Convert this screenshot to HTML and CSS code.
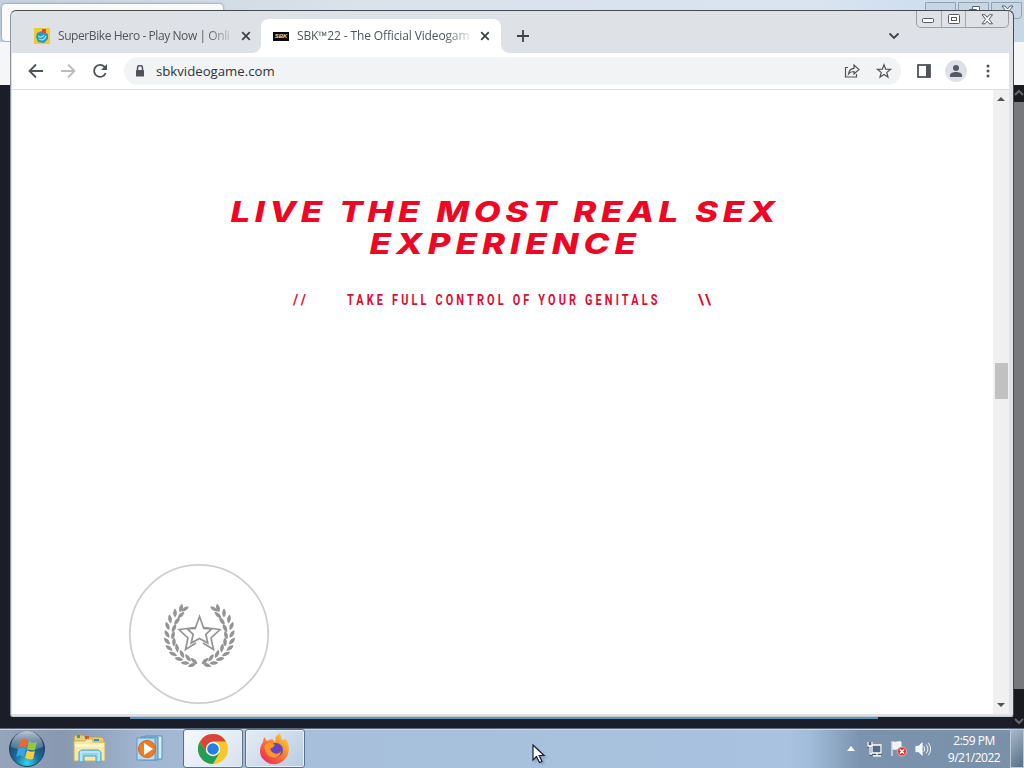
FILE: index.html
```html
<!DOCTYPE html>
<html lang="en">
<head>
<meta charset="utf-8">
<title>SBK 22 - The Official Videogame</title>
<link rel="stylesheet" href="styles.css">
</head>
<body>
<div class="desktop">
  <div class="rear">
    <div class="rear-title"><div class="rear-tab"></div>
      <div class="rear-controls">
        <span></span><span><svg width="13" height="13" viewBox="0 0 13 13"><path d="M4.500 4V1.500h7v7H9M1.500 4.500h7v7h-7z"/></svg></span><span><svg width="13" height="11" viewBox="0 0 13 11"><path d="M1 1h3l2.500 3L9 1h3L8.500 5.500 12 10H9L6.500 7 4 10H1l3.500-4.500z"/></svg></span>
      </div>
    </div>
    <div class="rear-bar"></div>
    <div class="rear-page"><div class="rear-scroll"><svg width="10" height="7" viewBox="0 0 10 7"><path d="M1 6l4-4 4 4"/></svg><i></i><svg width="10" height="7" viewBox="0 0 10 7"><path d="M1 1l4 4 4-4"/></svg></div></div>
    <div class="rear-line"></div>
  </div>

  <div class="window">
    <div class="tabs">
      <div class="tab">
        <svg class="favicon" width="16" height="16" viewBox="0 0 16 16"><path fill="#f2c931" d="M0 0h16v16H0z"/><path fill="#2698c9" d="M3 5l5-2 6 3v5l-4 4-6-1-2-5z"/><path fill="#e54835" d="M8 1h4v4H8z"/><path fill="none" stroke="#8be4ee" stroke-width="1.300" d="M4 8c2 2 5 1 6-1M5 11c3 2 6 0 7-3"/></svg>
        <span class="tab-text first">SuperBike Hero - Play Now | Onli</span>
        <svg class="close" width="10" height="10" viewBox="0 0 10 10"><path d="M1.200 1.200l7.600 7.600M8.800 1.200L1.200 8.800"/></svg>
      </div>
      <div class="tab active">
        <span class="sbk">SBK</span>
        <span class="tab-text second">SBK™22 - The Official Videogam</span>
        <svg class="close" width="10" height="10" viewBox="0 0 10 10"><path d="M1.200 1.200l7.600 7.600M8.800 1.200L1.200 8.800"/></svg>
      </div>
      <svg class="new-tab" width="12" height="12" viewBox="0 0 12 12"><path d="M6 0v12M0 6h12"/></svg>
      <svg class="tab-search" width="12" height="8" viewBox="0 0 12 8"><path d="M1.500 1.500L6 6l4.500-4.500"/></svg>
      <div class="controls">
        <span><svg width="13" height="6" viewBox="0 0 13 6"><rect x=".5" y=".5" width="11" height="4" rx="1"/></svg></span>
        <span><svg width="12" height="10" viewBox="0 0 12 10"><rect x=".5" y=".5" width="11" height="9" rx="1"/><rect x="3.500" y="3.500" width="5" height="3"/></svg></span>
        <span><svg width="13" height="11" viewBox="0 0 13 11"><path d="M1 .7h3L6.200 3.400 8.500.7h3L8 5.300l3.500 4.500h-3L6.200 7.200 4 9.800H1l3.500-4.500z"/></svg></span>
      </div>
    </div>
    <div class="toolbar">
      <svg class="nav" width="16" height="16" viewBox="0 0 16 16"><path d="M15 8H2M8 1.500L1.500 8 8 14.500"/></svg>
      <svg class="nav off" width="16" height="16" viewBox="0 0 16 16"><path d="M1 8h13M8 1.500L14.500 8 8 14.500"/></svg>
      <svg class="nav" width="16" height="16" viewBox="0 0 16 16"><path d="M13.700 10A6 6 0 1 1 12.500 3.800L14 5.300"/><path class="solid" d="M15 1v6H9z"/></svg>
      <div class="address">
        <svg class="lock" width="10" height="13" viewBox="0 0 10 13"><path d="M2.500 5V3a2.500 2.500 0 0 1 5 0v2"/><rect x="1" y="5" width="8" height="6.500" rx=".6"/></svg>
        <span class="url">sbkvideogame.com</span>
        <svg class="share" width="17" height="16" viewBox="0 0 17 16"><path d="M4 4.500H1.500v9.500h11V11M4.500 11c.5-4 2.500-5.500 5.500-5.700V2L15 6.500 10 11V8.500c-2.500 0-4 .5-5.500 2.500z"/></svg>
        <svg class="star" width="16" height="16" viewBox="0 0 16 16"><path d="M8 1.700l1.700 4.500 4.800.2-3.700 3 1.200 4.700L8 11.400 4 14.100l1.200-4.700-3.700-3 4.800-.2z"/></svg>
      </div>
      <svg class="panel" width="14" height="14" viewBox="0 0 14 14"><rect x="1" y="1" width="12" height="12"/><path d="M9 1h4v12H9z"/></svg>
      <svg class="avatar" width="22" height="22" viewBox="0 0 22 22"><circle cx="11" cy="11" r="11" fill="#dee1e6"/><circle cx="11" cy="8" r="3"/><path d="M5 17v-2c0-2 3-3 6-3s6 1 6 3v2z"/></svg>
      <svg class="dots" width="4" height="14" viewBox="0 0 4 14"><circle cx="2" cy="2" r="1.500"/><circle cx="2" cy="7" r="1.500"/><circle cx="2" cy="12" r="1.500"/></svg>
    </div>
    <div class="content">
      <main class="page">
        <svg class="heading" width="560" height="72" viewBox="0 0 560 72">
          <text transform="translate(7.500 28) scale(1.2 1)" textLength="454">LIVE THE MOST REAL SEX</text>
          <text transform="translate(146.500 60) scale(1.2 1)" textLength="222">EXPERIENCE</text>
        </svg>
        <svg class="subheading" width="430" height="20" viewBox="0 0 430 20">
          <text transform="translate(4 15)" textLength="13">//</text>
          <text transform="translate(58 15) scale(.78 1)" textLength="398">TAKE FULL CONTROL OF YOUR GENITALS</text>
          <text transform="translate(409 15)" textLength="13">\\</text>
        </svg>
        <svg class="badge" width="142" height="142" viewBox="-71 -71 142 142">
          <defs>
            <path id="leaf" d="M0 4.500C-2.600 1.500-2.200-2 0-4.500 2.200-2 2.600 1.500 0 4.500z"/>
            <g id="branch">
              <use href="#leaf" transform="translate(-18 -26) rotate(15)"/><use href="#leaf" transform="translate(-24 -21) rotate(0)"/><use href="#leaf" transform="translate(-29 -15) rotate(-9)"/><use href="#leaf" transform="translate(-31.500 -8) rotate(-22)"/><use href="#leaf" transform="translate(-32 0) rotate(-32)"/><use href="#leaf" transform="translate(-32 7) rotate(-42)"/><use href="#leaf" transform="translate(-30 14) rotate(-53)"/><use href="#leaf" transform="translate(-26 20) rotate(-65)"/><use href="#leaf" transform="translate(-20 25) rotate(-76)"/><use href="#leaf" transform="translate(-14 29) rotate(-88)"/><use href="#leaf" transform="translate(-7 31) rotate(-110)"/>
              <use href="#leaf" transform="translate(-14 -25) rotate(58)"/><use href="#leaf" transform="translate(-18 -19) rotate(48)"/><use href="#leaf" transform="translate(-22 -13) rotate(38)"/><use href="#leaf" transform="translate(-25 -6) rotate(26)"/><use href="#leaf" transform="translate(-26 1) rotate(14)"/><use href="#leaf" transform="translate(-25 8) rotate(2)"/><use href="#leaf" transform="translate(-22 14) rotate(-10)"/><use href="#leaf" transform="translate(-17 20) rotate(-25)"/><use href="#leaf" transform="translate(-11 24) rotate(-36)"/><use href="#leaf" transform="translate(-5 27) rotate(-48)"/>
            </g>
          </defs>
          <circle r="69.200"/>
          <g class="wreath"><use href="#branch"/><use href="#branch" transform="translate(1) scale(-1 1)"/></g>
          <path class="stars" d="M.500-17.500l4.300 12 8 .3-6 5.500 2 8.700-8.300-4.500-8.300 4.500 2-8.700-6-5.500 8-.3z"/>
          <path class="stars" d="M-4-6.500l-16 2 9 8.500-2.500 11.500L-3 9M5-6.500l16 2-9 8.500 2.500 11.500L4 9"/>
        </svg>
      </main>
      <div class="scrollbar"><i class="up"></i><i class="thumb"></i><i class="down"></i></div>
    </div>
  </div>

  <footer class="taskbar">
    <svg class="start" width="38" height="38" viewBox="0 0 38 38"><defs><radialGradient id="orb" cx=".5" cy=".9" r=".8"><stop stop-color="#35d6ec"/><stop offset=".45" stop-color="#176b9c"/><stop offset="1" stop-color="#243f61"/></radialGradient><linearGradient id="shine" x2="0" y2="1"><stop stop-color="#f0f6fb" stop-opacity=".75"/><stop offset="1" stop-color="#b1c7db" stop-opacity=".25"/></linearGradient></defs><circle cx="19" cy="19" r="17.500" fill="url(#orb)" stroke="#233d5b"/><path fill="url(#shine)" d="M3 17a16 16 0 0 1 32 0c-10 4-22 4-32 0z"/><path fill="#ef672d" d="M13 10c3-2 4-1 7 0l-2 8c-3-2-5-2-8 0z"/><path fill="#91c849" d="M21 11c3 2 5 2 8 1l-2 8c-3 1-5 0-8-1z"/><path fill="#37a6df" d="M10 19c3-2 5-2 8 0l-2 8c-3-2-5-2-8 0z"/><path fill="#fecb43" d="M19 20c3 2 5 2 8 1l-2 8c-3 1-5 0-8-1z"/></svg>
    <svg class="explorer" width="36" height="30" viewBox="0 0 36 30"><path fill="#e5ce79" stroke="#b99d52" d="M2 3l2-2h7l2 2h17l2 2v21H2z"/><path fill="#4b9c4c" d="M5 1h3v3H5z"/><path fill="#d45437" d="M13 2h4v3h-4z"/><path fill="#3e8ac9" d="M22 5h5v2h-5z"/><path fill="#f8e9a5" stroke="#c9ae62" d="M2 7h11l2-2h6v3h12v19H2z"/><path fill="#fff6c8" d="M3 10h29v3H3z"/><path fill="#90d4ee" stroke="#4ba5d1" d="M7 28V18l3-2h16l3 2v10h-5v-6H12v6z"/><path stroke="#d9f8ff" d="M8 18h20M9 19v8M27 19v8"/></svg>
    <svg class="player" width="30" height="28" viewBox="0 0 30 28"><path fill="#d8edf9" stroke="#4e93bf" d="M9 1h17v23H9z"/><path fill="#8abddd" stroke="#4e93bf" d="M5 2h17v23H5z"/><path fill="#b5dcf1" stroke="#5d9bc0" d="M1 3h18v22H1z"/><circle cx="11" cy="14" r="8.500" fill="#ef7d26" stroke="#d86116"/><path fill="#fff" d="M8 8l9 6-9 6z"/></svg>
    <div class="task chrome-task"><svg width="30" height="30" viewBox="-15 -15 30 30"><circle r="15" fill="#f9c827"/><path fill="#dc4437" d="M-13-7.500A15 15 0 0 1 13-7.500H0L-6.500 3.700z"/><path fill="#249d58" d="M-13-7.500A15 15 0 0 0 0 15L6.500 3.700 0 7-6.500 3.700z"/><circle r="7.200" fill="#fff"/><circle r="5.800" fill="#287de1"/></svg></div>
    <div class="task"><svg width="32" height="32" viewBox="0 0 32 32"><defs><linearGradient id="fox" x1="1" x2=".2" y2="1"><stop stop-color="#ffe340"/><stop offset=".45" stop-color="#ff8b27"/><stop offset="1" stop-color="#ee265e"/></linearGradient></defs><path fill="url(#fox)" d="M4 9l1-5 3 4 5-2 3 3 1-6 4-3 2 7 4-1c5 9 3 17-3 22-6 5-15 4-20-2C0 21 0 15 4 9z"/><circle cx="17" cy="17" r="7" fill="#6844bd"/><path fill="#ff9629" d="M6 12c4-3 7-2 10 0l-3 3c-2 0-2 2 0 4 4 3 7 2 9-1 0 7-10 9-14 3-2-3-3-6-2-9z"/></svg></div>
    <div class="tray">
      <svg class="arrow" width="8" height="5" viewBox="0 0 8 5"><path d="M0 5l4-5 4 5z"/></svg>
      <svg class="network" width="16" height="16" viewBox="0 0 16 16"><path fill="#536b89" stroke="#fff" stroke-width="1.300" d="M5 4h9v8H5zM6 15h8M10 12v3M1 1v4h4V1M3 5v8h2"/></svg>
      <svg class="flag" width="16" height="17" viewBox="0 0 16 17"><path fill="#eef3f8" stroke="#fff" d="M1 1v15M2 2c4 1 5-1 8 0v7c-4-1-5 1-8 0z"/><circle cx="11" cy="11.500" r="4.500" fill="#dc3034" stroke="#efb3b2"/><path stroke="#fff" stroke-width="1.500" d="M9 9.500l4 4M13 9.500l-4 4"/></svg>
      <svg class="sound" width="16" height="16" viewBox="0 0 18 16"><path fill="#eef5fb" stroke="#fff" d="M1 5h3l4-4v14l-4-4H1z"/><path fill="none" stroke="#fff" d="M10 5q2 3 0 6M12.500 3q4 5 0 10M15 1q5 7 0 14"/></svg>
      <div class="clock"><span>2:59 PM</span><span>9/21/2022</span></div><i class="show-desktop"></i>
    </div>
  </footer>
  <svg class="cursor" width="14" height="20" viewBox="0 0 14 20"><path d="M1 1v15l3.500-3.500L7.500 18.500l2.500-1-2.800-6H12z"/></svg>
</div>
</body>
</html>
```
FILE: styles.css
```css
*{box-sizing:border-box}
body{margin:0;font-family:"Open Sans","Noto Sans",sans-serif;overflow:hidden}
svg{display:block;flex:none}
.desktop{position:relative;width:1024px;height:768px;overflow:hidden;background:#1b232d}
.rear{display:flex;flex-direction:column;height:728px;background:#1b1e28}
.rear-title{height:42px;background:linear-gradient(90deg,#c6d2de,#dae2ea 35%,#d9e4f0 80%,#c8d7e6);display:flex;justify-content:space-between;padding:4px 0 0 2px}
.rear-tab{width:221px;height:37px;background:#fafafa;border-radius:4px;box-shadow:0 0 3px #71808f}
.rear-controls{display:flex;gap:2px;margin:-2px 2px 0 0}
.rear-controls span{width:31px;height:17px;border:1px solid #93a2b1;border-radius:0 0 4px 4px;padding:2px 9px;background:#c8d5e3}
.rear-controls path{fill:#fff;stroke:#53606f}
.rear-bar{height:43px;background:#f5f6f7}
.rear-page{flex:1;display:flex;justify-content:flex-end}
.rear-scroll{width:11px;background:#1a1b20;display:flex;flex-direction:column;align-items:center;padding:4px 0 3px}
.rear-scroll i{width:11px;height:587px;background:#76787b;margin-top:6px;margin-bottom:auto}
.rear-scroll path{fill:none;stroke:#66676c;stroke-width:2}
.rear-line{position:absolute;left:130px;top:717px;width:748px;height:2px;background:#6293b6}
.window{position:absolute;left:10px;top:10px;width:1004px;height:707px;border:1px solid #454950;border-bottom-color:#c6c9cd;border-left-color:#8e949b;border-radius:6px 6px 3px 3px;background:#dee1e6;padding:0 4px 2px 1px;overflow:hidden;display:flex;flex-direction:column}
.tabs{height:42px;flex:none;display:flex;align-items:flex-end;padding-left:9px}
.tab{height:34px;width:240px;display:flex;align-items:center;padding-left:13px}
.tab.active{position:relative;background:#fff;border-radius:8px 8px 0 0;padding-left:12px}
.tab.active:before,.tab.active:after{content:"";position:absolute;bottom:0;width:8px;height:8px}
.tab.active:before{left:-8px;background:radial-gradient(circle at 0 0,transparent 7.5px,#fff 8px)}
.tab.active:after{right:-8px;background:radial-gradient(circle at 100% 0,transparent 7.5px,#fff 8px)}
.tab-text{font-size:12px;line-height:18px;overflow:hidden;white-space:nowrap;width:174px;color:#51565c;margin-left:8px;-webkit-mask-image:linear-gradient(90deg,#000 148px,#0002 174px)}
.first{letter-spacing:-.42px}.second{letter-spacing:-.13px}
.close{margin-left:9px}
.close path,.new-tab path,.tab-search path{fill:none;stroke:#3e4349;stroke-width:1.8}
.sbk{width:16px;height:9px;background:#080808;color:#ddd;font:bold italic 6px/9px "Liberation Sans",sans-serif;text-align:center}
.new-tab{margin:0 0 11px 16px}
.tab-search{margin:0 0 13px 359px}
.controls{align-self:flex-start;display:flex;width:93px;height:17px;border:1px solid #9a9ea4;border-top:0;border-radius:0 0 5px 5px;margin-left:16px}
.controls span{display:flex;align-items:center;justify-content:center;width:25px;border-right:1px solid #a5a9ae}
.controls span:last-child{width:42px;border:0}
.controls span:first-child{padding-top:4px}
.controls rect,.controls path{fill:#fff;stroke:#555a62}
.toolbar{height:37px;flex:none;background:#fff;border-bottom:1px solid #dadce0;display:flex;align-items:center;padding-left:16px}
.nav{margin-right:16px}
.nav path{fill:none;stroke:#505459;stroke-width:1.8}
.nav.off path{stroke:#b9bbbd}
.nav .solid{fill:#505459;stroke:none}
.address{height:28px;width:777px;border-radius:14px;background:#f1f3f4;display:flex;align-items:center;padding-left:11px}
.lock path{fill:none;stroke:#505459;stroke-width:1.5}
.lock rect{fill:#505459}
.url{font-size:13.2px;color:#303337;margin-left:11px;width:127px;white-space:nowrap}
.share{margin-left:561px}
.star{margin-left:15px}
.share path,.star path{fill:none;stroke:#505459;stroke-width:1.2}
.panel{margin-left:16px}
.panel rect{fill:none;stroke:#505459;stroke-width:1.8}
.panel path{fill:#505459}
.avatar{margin-left:14px;fill:#555b66}
.dots{margin-left:19px;fill:#505459}
.content{flex:1;display:flex;background:#fff}
.page{width:981px;display:flex;flex-direction:column;align-items:flex-start;padding-top:104px}
.heading{margin-left:211px}
.heading text{font:italic 800 29px/32px Inter,sans-serif;fill:#ee0725}
.subheading{margin:24px 0 0 277px}
.subheading text{font:700 14px/20px Roboto,sans-serif;fill:#dc0c32}
.badge{margin:253px 0 0 116px}
.badge circle{fill:none;stroke:#ceced0;stroke-width:1.8}
.wreath{fill:#949494}
.stars{fill:none;stroke:#949494;stroke-width:1.7}
.scrollbar{width:16px;background:#f0f0f1;display:flex;flex-direction:column;align-items:center}
.up,.down{border:4px solid transparent}
.up{border-top:0;border-bottom:4px solid #505254;margin-top:7px}
.thumb{width:13px;height:36px;background:#c1c1c2;margin-top:262px}
.down{border-bottom:0;border-top:4px solid #505254;margin-top:auto;margin-bottom:7px}
.taskbar{height:40px;border-top:1px solid #57697d;box-shadow:inset 0 1px #d0d5e4;background:linear-gradient(90deg,#95a5ba,#8798b0 6%,#a1b6d1 14%,#a7bfda 30%,#a8c2df 77%,#a1bddb 79%,#7c93ae 84%,#7990a8);display:flex;align-items:center;padding-left:8px}
.start{margin-right:26px}
.explorer{margin-right:28px}
.player{margin-right:17px}
.task{width:60px;height:39px;border:1px solid #5c7087;border-radius:3px;background:linear-gradient(135deg,#e4edf6,#b8cce1);box-shadow:inset 0 0 0 1px #e8f1fb;display:flex;align-items:center;justify-content:center}
.chrome-task{margin-right:2px;background:linear-gradient(135deg,#f6f9fc,#d7e2ee)}
.tray{margin-left:auto;height:39px;display:flex;align-items:center;color:#fff}
.arrow{fill:#fff;margin-right:12px}
.network{margin-right:8px}
.flag{margin-right:8px}
.sound{margin-right:10px}
.network path{filter:drop-shadow(0 1px #34475d)}
.clock{width:66px;display:flex;flex-direction:column;align-items:center;font-size:12px;line-height:17px;letter-spacing:-.5px;margin-right:3px}
.show-desktop{width:14px;height:39px;border:1px solid #bcc9d7;background:linear-gradient(135deg,#a9b8c8,#566f88)}
.cursor{position:absolute;left:532px;top:744px;filter:drop-shadow(2px 2px 1px #53657955)}
.cursor path{fill:#fff;stroke:#18202c;stroke-width:1.2}
```
